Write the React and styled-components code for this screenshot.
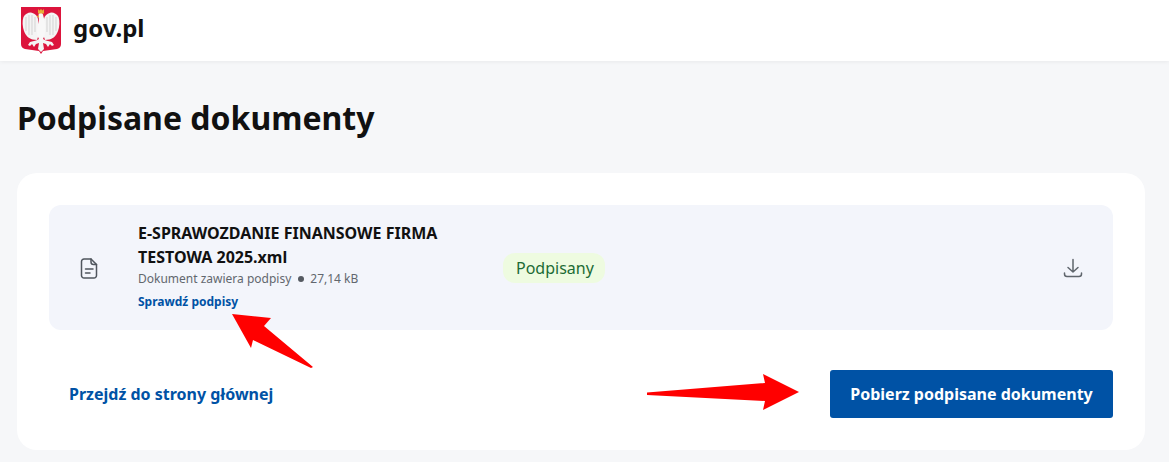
import styled, { createGlobalStyle } from 'styled-components'

const GlobalStyle = createGlobalStyle`
  html, body {
    margin: 0;
    padding: 0;
    background: #f6f7f9;
    font-family: "Noto Sans", "Open Sans", sans-serif;
    color: #111;
  }
  * { box-sizing: border-box; }
`

const Page = styled.div`
  position: relative;
  width: 1169px;
  height: 462px;
  overflow: hidden;
`
const Header = styled.header`
  height: 61px;
  background: #fff;
  box-shadow: 0 1px 4px rgba(0, 0, 0, 0.06);
  display: flex;
  align-items: center;
  gap: 12px;
  padding: 0 0 5px 21px;
`
const Brand = styled.span`
  font-size: 24px;
  font-weight: 700;
  line-height: 32px;
  color: #111;
`
const Main = styled.main`
  padding: 33px 24px 0 17px;
`
const Title = styled.h1`
  margin: 0 0 31px;
  font-size: 32px;
  line-height: 48px;
  font-weight: 700;
  color: #111;
`
const Card = styled.section`
  background: #fff;
  border-radius: 20px;
  height: 277px;
  padding: 32px;
`
const FileRow = styled.div`
  display: flex;
  align-items: center;
  height: 125px;
  background: #f3f5fb;
  border-radius: 12px;
  padding: 0 30px;
`
const FileIcon = styled.div`
  width: 59px;
  display: flex;
  color: #50565e;
`
const FileInfo = styled.div`
  width: 366px;
  padding-bottom: 3px;
`
const FileName = styled.div`
  font-size: 16px;
  line-height: 24px;
  font-weight: 700;
  width: 310px;
  color: #111;
`
const FileMeta = styled.div`
  display: flex;
  align-items: center;
  gap: 6px;
  margin-top: 1px;
  font-size: 12px;
  line-height: 18px;
  color: #62676e;
`
const Dot = styled.span`
  width: 6px;
  height: 6px;
  border-radius: 50%;
  background: #555a61;
  margin: 0 0 0 1px;
`
const SmallLink = styled.a`
  display: block;
  margin-top: 5px;
  font-size: 12px;
  line-height: 18px;
  font-weight: 700;
  color: #0052a5;
`
const Badge = styled.span`
  font-size: 16px;
  line-height: 30px;
  height: 30px;
  margin-left: -1px;
  padding: 0 11px 0 13px;
  border-radius: 12px;
  background: #eefbe0;
  color: #1d6b35;
`
const DownloadButton = styled.div`
  margin-left: auto;
  margin-top: 1px;
  display: flex;
  color: #5f656c;
`
const Actions = styled.div`
  display: flex;
  align-items: center;
  justify-content: space-between;
  margin-top: 40px;
  padding-left: 20px;
`
const MainLink = styled.a`
  font-size: 16px;
  line-height: 24px;
  font-weight: 700;
  color: #0052a5;
`
const PrimaryButton = styled.button`
  width: 283px;
  height: 48px;
  border: 0;
  border-radius: 3px;
  background: #0052a5;
  color: #fff;
  font-family: inherit;
  font-size: 16px;
  font-weight: 700;
`
const Annotation = styled.svg`
  position: absolute;
  left: 0;
  top: 0;
  pointer-events: none;
`

function EagleHalf() {
  return (
    <>
      <path d="M23 17C24 13 27 11 30.500 10.500C33 10.500 36 12 37.500 15C39 19 38.500 25 37 29C35.500 33 32.500 36.500 28.500 37.500L24 38L22 32Z" fill="#f4f4f4" />
      <path d="M26 15V30M29 13V33M32 13V33M35 15V29" stroke="#c4c4c4" strokeWidth="0.7" fill="none" />
      <path d="M20 36L25 38.500L31 40L33 43L31 44L29 42L27 45L25 42L22 41L23 47L20 50Z" fill="#f4f4f4" />
    </>
  )
}

function Emblem() {
  return (
    <svg width="40" height="53" viewBox="0 0 40 53">
      <path d="M0 5h40v37q0 4-4 5l-14 2-2 3-2-3-14-2q-4-1-4-5z" fill="#dc143c" />
      <EagleHalf />
      <g transform="matrix(-1 0 0 1 40 0)">
        <EagleHalf />
      </g>
      <path d="M17.500 13C18 10.500 21 10 22 12.500C23 17 25 22 24 30C23.500 35 22 38 20 39C18 38 16.500 35 16 30C15.500 24 19 19 17.500 15Z" fill="#f8f8f8" />
      <path d="M18 13L15.500 14.500L18 15.500Z" fill="#e7ac3a" />
      <path d="M17 7L18.500 8.500L20 7L21.500 8.500L23 7V11.500H17Z" fill="#e7ac3a" />
    </svg>
  )
}

function DocumentIcon() {
  return (
    <svg width="20" height="22" viewBox="0 0 20 22" fill="none" stroke="currentColor" strokeWidth="1.5" strokeLinecap="round" strokeLinejoin="round">
      <path d="M12 2H5a2.500 2.500 0 0 0-2.500 2.500v14A2.500 2.500 0 0 0 5 21h10a2.500 2.500 0 0 0 2.500-2.500V7.500z" />
      <path d="M12 2v3a2.500 2.500 0 0 0 2.500 2.500h3" />
      <path d="M6.500 12H14M6.500 16H11" />
    </svg>
  )
}

function DownloadIcon() {
  return (
    <svg width="20" height="20" viewBox="0 0 20 20" fill="none" stroke="currentColor" strokeWidth="1.5" strokeLinecap="round" strokeLinejoin="round">
      <path d="M10 1.500V14M5 9.500l5 4.500 5-4.500" />
      <path d="M1.500 15v1a2.500 2.500 0 0 0 2.500 2.500h12a2.500 2.500 0 0 0 2.500-2.500v-1" />
    </svg>
  )
}

export default function App() {
  return (
    <Page>
      <GlobalStyle />
      <Header>
        <Emblem />
        <Brand>gov.pl</Brand>
      </Header>
      <Main>
        <Title>Podpisane dokumenty</Title>
        <Card>
          <FileRow>
            <FileIcon>
              <DocumentIcon />
            </FileIcon>
            <FileInfo>
              <FileName>E-SPRAWOZDANIE FINANSOWE FIRMA TESTOWA 2025.xml</FileName>
              <FileMeta>
                Dokument zawiera podpisy <Dot /> 27,14 kB
              </FileMeta>
              <SmallLink>Sprawdź podpisy</SmallLink>
            </FileInfo>
            <Badge>Podpisany</Badge>
            <DownloadButton>
              <DownloadIcon />
            </DownloadButton>
          </FileRow>
          <Actions>
            <MainLink>Przejdź do strony głównej</MainLink>
            <PrimaryButton>Pobierz podpisane dokumenty</PrimaryButton>
          </Actions>
        </Card>
      </Main>
      <Annotation width="1169" height="462">
        <path d="M232 314L271 318L264 326L313 367L311 368L253 340L251 348Z" fill="#f00" />
        <path d="M647 392.500L765 383L763 374L799 392L763 410L765 401L647 395Z" fill="#f00" />
      </Annotation>
    </Page>
  )
}
